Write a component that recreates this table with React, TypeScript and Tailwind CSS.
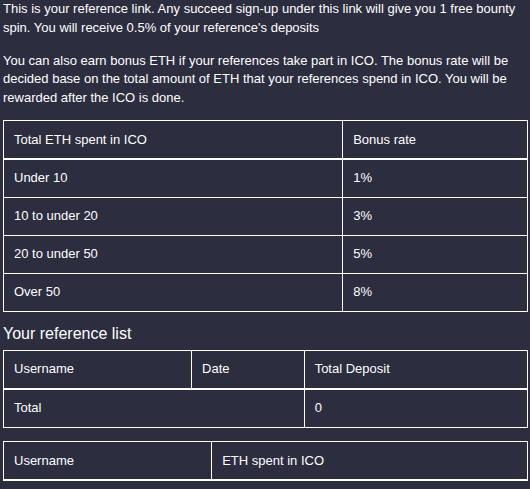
const BONUS_RATES = [
  { range: 'Under 10', rate: '1%' },
  { range: '10 to under 20', rate: '3%' },
  { range: '20 to under 50', rate: '5%' },
  { range: 'Over 50', rate: '8%' },
]

const cell = 'border border-white px-[10px] py-[9.2px] text-left font-normal align-top'
const headCell = 'border border-white border-b-2 px-[10px] py-[9.2px] text-left font-normal align-top'

export default function App() {
  return (
    <div className="min-h-screen bg-[#2c2d3f] text-white pl-[3px] pr-[2px] text-[13px] leading-[18.57px] font-['Liberation_Sans',Arial,sans-serif]">
      <p className="mb-[14.5px]">
        This is your reference link. Any succeed sign-up under this link will give you 1 free bounty spin. You will receive 0.5% of your reference's deposits
      </p>
      <p className="mb-[13px]">
        You can also earn bonus ETH if your references take part in ICO. The bonus rate will be decided base on the total amount of ETH that your references spend in ICO. You will be rewarded after the ICO is done.
      </p>

      <table className="w-full border-collapse">
        <thead>
          <tr>
            <th className={headCell}>Total ETH spent in ICO</th>
            <th className={headCell}>Bonus rate</th>
          </tr>
        </thead>
        <tbody>
          {BONUS_RATES.map(r => (
            <tr key={r.range}>
              <td className={cell}>{r.range}</td>
              <td className={cell}>{r.rate}</td>
            </tr>
          ))}
        </tbody>
      </table>

      <h3 className="text-[16px] leading-[17.6px] font-normal mt-[13px] mb-[7.5px]">Your reference list</h3>

      <table className="w-full border-collapse">
        <thead>
          <tr>
            <th className={headCell}>Username</th>
            <th className={headCell}>Date</th>
            <th className={headCell}>Total Deposit</th>
          </tr>
        </thead>
        <tbody>
          <tr>
            <td colSpan={2} className={cell}>Total</td>
            <td className={cell}>0</td>
          </tr>
        </tbody>
      </table>

      {/* ICO spend per reference */}
      <table className="w-full border-collapse mt-[13.5px]">
        <thead>
          <tr>
            <th className={headCell}>Username</th>
            <th className={headCell}>ETH spent in ICO</th>
          </tr>
        </thead>
      </table>
    </div>
  )
}
